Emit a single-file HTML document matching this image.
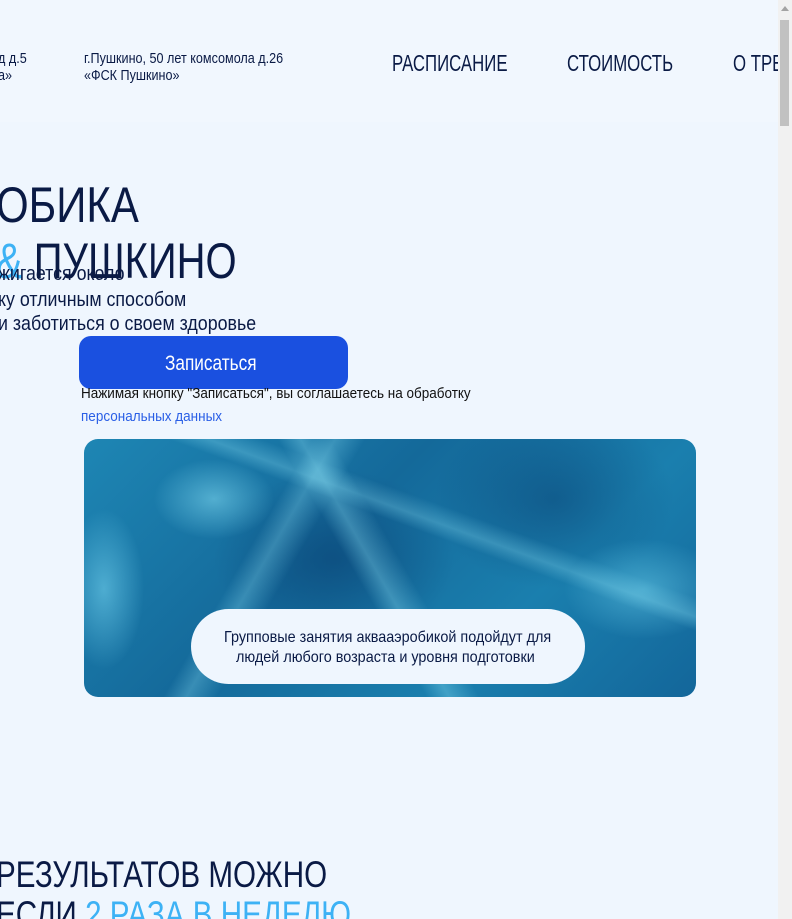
<!DOCTYPE html>
<html><head><meta charset="utf-8"><style>
html,body{margin:0;padding:0;overflow:hidden;width:792px;height:919px;}
body{background:#eff6fe;position:relative;font-family:"Liberation Sans",sans-serif;color:#0a1a45;}
.t{position:absolute;white-space:nowrap;transform-origin:0 0;transform:scaleX(0.82);}
.hdr{position:absolute;left:0;top:0;width:778px;height:122px;background:#f1f7fe;}
.sb{position:absolute;right:0;top:0;width:14px;height:919px;background:#f1f1f1;}
.sbt{position:absolute;right:3px;top:20px;width:9px;height:106px;background:#c1c1c1;}
.btn{position:absolute;left:79px;top:336px;width:269px;height:53px;background:#1a50e0;border-radius:12px;color:#fff;}
.pool{position:absolute;left:84px;top:439px;width:612px;height:258px;border-radius:14px;overflow:hidden;
background:
linear-gradient(60deg,transparent 45%,rgba(140,225,245,.35) 48%,transparent 52%),
linear-gradient(120deg,transparent 30%,rgba(140,225,245,.3) 33%,transparent 37%),
linear-gradient(20deg,transparent 60%,rgba(140,225,245,.3) 63%,transparent 67%),
radial-gradient(ellipse 60px 40px at 130px 60px,rgba(140,230,250,.5),transparent),
radial-gradient(ellipse 80px 50px at 560px 150px,rgba(120,220,245,.45),transparent),
radial-gradient(ellipse 40px 80px at 20px 150px,rgba(130,225,250,.5),transparent),
radial-gradient(ellipse 120px 90px at 250px 120px,rgba(8,60,110,.55),transparent),
radial-gradient(ellipse 120px 90px at 470px 60px,rgba(8,60,110,.45),transparent),
linear-gradient(135deg,#1e86b4,#14699a 40%,#1a7fae 70%,#13669a);}
.pill{position:absolute;left:107px;top:170px;width:394px;height:75px;border-radius:38px;background:#eff6fe;}
</style></head><body>
<div class="hdr"></div>
<div class="t" style="left:-2px;top:50px;font-size:15px;transform:scaleX(.84)">д д.5</div>
<div class="t" style="left:-2px;top:67px;font-size:15px;transform:scaleX(.84)">а»</div>
<div class="t" style="left:84px;top:50px;font-size:15px;transform:scaleX(.84)">г.Пушкино, 50 лет комсомола д.26</div>
<div class="t" style="left:84px;top:67px;font-size:15px;transform:scaleX(.84)">«ФСК Пушкино»</div>
<div class="t" style="left:392px;top:50px;font-size:23px;transform:scaleX(.73)">РАСПИСАНИЕ</div>
<div class="t" style="left:567px;top:50px;font-size:23px;transform:scaleX(.73)">СТОИМОСТЬ</div>
<div class="t" style="left:733px;top:50px;font-size:23px;transform:scaleX(.73)">О ТРЕ</div>

<div class="t" style="left:-4px;top:176px;font-size:50px;transform:scaleX(.84)">ОБИКА</div>
<div class="t" style="left:-4px;top:232px;font-size:50px;transform:scaleX(.80)"><span style="color:#3db2f5">&amp;</span> ПУШКИНО</div>
<div class="t" style="left:-2px;top:263px;font-size:20px;transform:scaleX(.89)">жигается около</div>
<div class="t" style="left:-2px;top:289px;font-size:20px;transform:scaleX(.89)">ку отличным способом</div>
<div class="t" style="left:-2px;top:313px;font-size:20px;transform:scaleX(.89)">и заботиться о своем здоровье</div>

<div class="btn"><div class="t" style="left:86px;top:16px;font-size:21px;color:#fff;">Записаться</div></div>
<div class="t" style="left:81px;top:385px;font-size:15px;color:#111;transform:scaleX(.90)">Нажимая кнопку "Записаться", вы соглашаетесь на обработку</div>
<div class="t" style="left:81px;top:408px;font-size:15px;color:#2a5fe6;transform:scaleX(.90)">персональных данных</div>

<div class="pool"><div class="pill">
<div class="t" style="left:33px;top:20px;font-size:16px;transform:scaleX(.90)">Групповые занятия аквааэробикой подойдут для</div>
<div class="t" style="left:45px;top:40px;font-size:16px;transform:scaleX(.90)">людей любого возраста и уровня подготовки</div>
</div></div>

<div class="t" style="left:-4px;top:854px;font-size:37px;transform:scaleX(.80)">РЕЗУЛЬТАТОВ МОЖНО</div>
<div class="t" style="left:-4px;top:894px;font-size:37px;transform:scaleX(.80)">ЕСЛИ <span style="color:#3db2f5">2 РАЗА В НЕДЕЛЮ</span></div>

<div class="sb"><div class="sbt"></div><div style="position:absolute;left:3px;top:6px;width:0;height:0;border-left:4px solid transparent;border-right:4px solid transparent;border-bottom:5px solid #a3a3a3;"></div></div>
</body></html>
